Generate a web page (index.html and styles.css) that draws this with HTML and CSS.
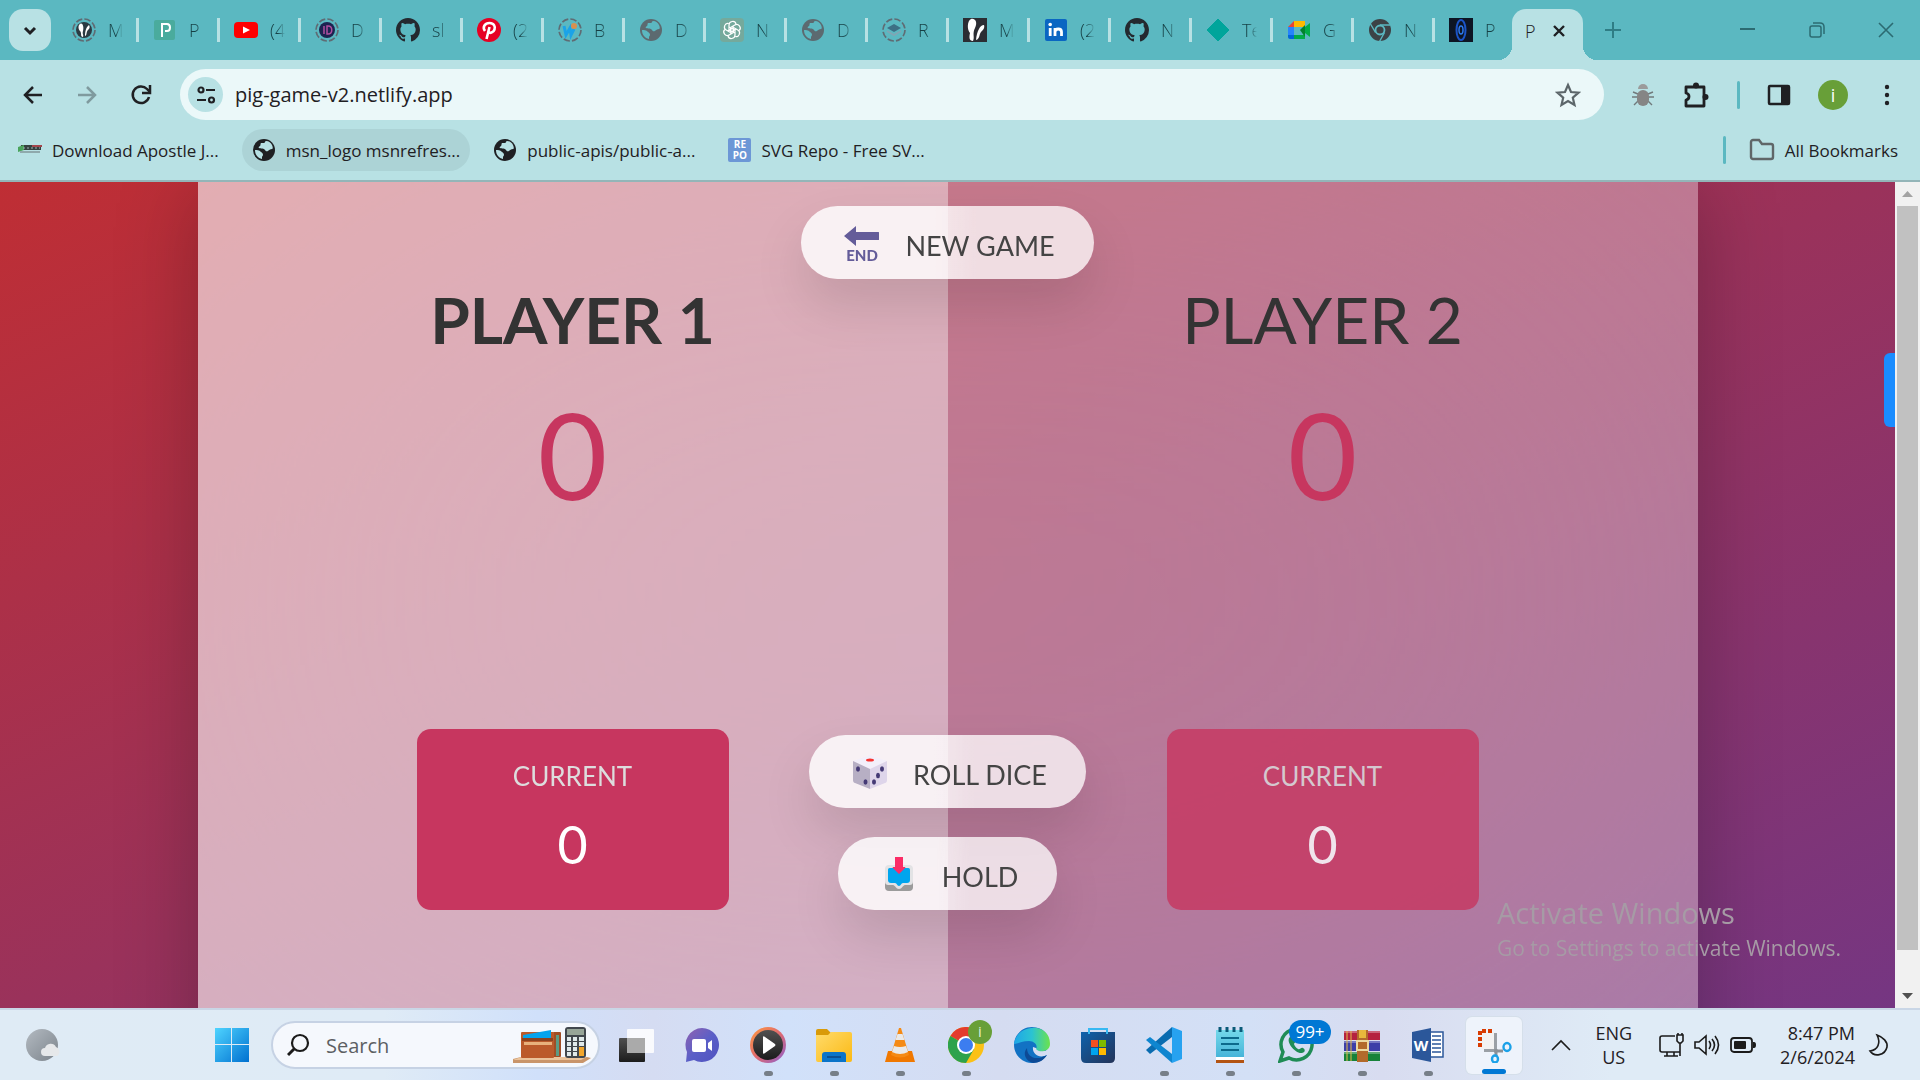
FILE: index.html
```html
<!DOCTYPE html>
<html lang="en">
<head>
<meta charset="utf-8">
<title>Pig Game</title>
<link rel="stylesheet" href="styles.css">
</head>
<body>
<svg class="defs" aria-hidden="true">
  <defs>
    <linearGradient id="g-win" x1="0" y1="0" x2="1" y2="1"><stop offset="0" stop-color="#4fd4ff"/><stop offset="1" stop-color="#0070d0"/></linearGradient>
    <linearGradient id="g-chat" x1="0" y1="0" x2="1" y2="1"><stop offset="0" stop-color="#9162b0"/><stop offset=".5" stop-color="#5b5fc7"/><stop offset="1" stop-color="#4f52c0"/></linearGradient>
    <linearGradient id="g-media" x1="0" y1="0" x2="1" y2="1"><stop offset="0" stop-color="#ff9a3d"/><stop offset=".5" stop-color="#e06a70"/><stop offset="1" stop-color="#8a5fd0"/></linearGradient>
    <linearGradient id="g-dark" x1="0" y1="0" x2="0" y2="1"><stop offset="0" stop-color="#505050"/><stop offset="1" stop-color="#1c1c1c"/></linearGradient>
    <linearGradient id="g-folder" x1="0" y1="0" x2="1" y2="1"><stop offset="0" stop-color="#ffdb6b"/><stop offset="1" stop-color="#fbb914"/></linearGradient>
    <linearGradient id="g-edge" x1="0" y1="0" x2="1" y2="0"><stop offset="0" stop-color="#1fa6e8"/><stop offset=".5" stop-color="#2bc3d2"/><stop offset="1" stop-color="#6be34c"/></linearGradient>
    <linearGradient id="g-store" x1="0" y1="0" x2="1" y2="1"><stop offset="0" stop-color="#0d62ad"/><stop offset="1" stop-color="#243358"/></linearGradient>
    <linearGradient id="g-note" x1="0" y1="0" x2="0" y2="1"><stop offset="0" stop-color="#74d9ea"/><stop offset="1" stop-color="#45b3d8"/></linearGradient>
    <linearGradient id="g-moon" x1="0" y1="0" x2="1" y2="1"><stop offset="0" stop-color="#b3bac1"/><stop offset="1" stop-color="#7c848c"/></linearGradient>
    <symbol id="globe" viewBox="0 0 24 24"><circle cx="12" cy="12" r="11" fill="currentColor"/><path d="M14 3c-1 0-1 2-2 2H9c-1 1 0 2-1 3-1 1-2 1-1 2 2 1 5 0 6 2s2 1 3 1c1-1 2-2 4-2 1 0 1-2 0-4-1-2-3-4-6-4zM3 12c2 0 4 0 6 2 1 1 2 1 2 3 0 1-1 1-1 2v2c-4-1-7-4-7-9z" class="globe-land"/></symbol>
    <symbol id="ring" viewBox="0 0 24 24"><circle cx="12" cy="12" r="11" fill="none" stroke="#5f6c74" stroke-width="1.7" stroke-dasharray="6.5 2.14"/></symbol>
    <symbol id="github" viewBox="0 0 16 16"><path fill="#24292f" d="M8 0C3.58 0 0 3.58 0 8c0 3.54 2.29 6.53 5.47 7.59.4.07.55-.17.55-.38 0-.19-.01-.82-.01-1.49-2.01.37-2.53-.49-2.69-.94-.09-.23-.48-.94-.82-1.13-.28-.15-.68-.52-.01-.53.63-.01 1.08.58 1.23.82.72 1.21 1.87.87 2.33.66.07-.52.28-.87.51-1.07-1.78-.2-3.64-.89-3.64-3.95 0-.87.31-1.59.82-2.15-.08-.2-.36-1.02.08-2.12 0 0 .67-.21 2.2.82.64-.18 1.32-.27 2-.27s1.36.09 2 .27c1.53-1.04 2.2-.82 2.2-.82.44 1.1.16 1.92.08 2.12.51.56.82 1.27.82 2.15 0 3.07-1.87 3.75-3.65 3.95.29.25.54.73.54 1.48 0 1.07-.01 1.93-.01 2.2 0 .21.15.46.55.38A8.01 8.01 0 0 0 16 8c0-4.42-3.58-8-8-8z"/></symbol>
  </defs>
</svg>

<header class="browser">
  <div class="tabstrip">
    <button class="tab-search" aria-label="Search tabs"><svg width="24" height="24" viewBox="0 0 24 24"><path d="M7 10l5 5 5-5" fill="none" stroke="#1f2023" stroke-width="3"/></svg></button>
    <nav class="tabs" aria-label="Tabs">
      <a class="tab" href="#"><svg class="fav" viewBox="0 0 24 24"><use href="#ring"/><circle cx="12" cy="12" r="8" fill="#2b3a42"/><path d="M8 6c3-2 4 4 3 7s1 4 0 6c-3 0-1-4-3-6s-2-6 0-7zM17 7c-3 2-4 7-4 11 2 0 1-4 3-6s2-3 1-5z" fill="#fff"/></svg><span>M</span></a>
      <a class="tab" href="#"><svg class="fav" viewBox="0 0 24 24"><rect x="1" y="2" width="21" height="20" rx="2" fill="#4aab9d"/><path d="M9 19V6h5c4 0 4 7 0 7h-2" fill="none" stroke="#fff" stroke-width="2"/></svg><span>P</span></a>
      <a class="tab" href="#"><svg class="fav" viewBox="0 0 24 24"><rect y="4" width="24" height="16" rx="4" fill="#f00"/><path d="M9 8.500l7 3.500-7 3.500z" fill="#fff"/></svg><span>(4</span></a>
      <a class="tab" href="#"><svg class="fav" viewBox="0 0 24 24"><use href="#ring"/><circle cx="12" cy="12" r="8" fill="#1c2450"/><path d="M9 8v8M12 8v8h1c5 0 5-8 0-8z" fill="none" stroke="#b04fa0" stroke-width="1.500"/></svg><span>D</span></a>
      <a class="tab" href="#"><svg class="fav" viewBox="0 0 24 24"><use href="#github"/></svg><span>sl</span></a>
      <a class="tab" href="#"><svg class="fav" viewBox="0 0 24 24"><circle cx="12" cy="12" r="12" fill="#e60023"/><path d="M8 13c-3-4 0-8 4.500-8s6 3.500 5 6.500-5 4.500-6 2M12.500 9l-3 12" fill="none" stroke="#fff" stroke-width="2.600"/></svg><span>(2</span></a>
      <a class="tab" href="#"><svg class="fav" viewBox="0 0 24 24"><use href="#ring"/><path d="M6 8l2 9 4-7 1 7 3-6" fill="none" stroke="#1ba3e8" stroke-width="3"/><circle cx="16" cy="8" r="3" fill="#d89050"/></svg><span>B</span></a>
      <a class="tab dim" href="#"><svg class="fav" viewBox="0 0 24 24"><use href="#globe"/></svg><span>D</span></a>
      <a class="tab" href="#"><svg class="fav" viewBox="0 0 24 24"><rect width="24" height="24" rx="4" fill="#75a99c"/><g fill="none" stroke="#fff" stroke-width="1.200"><path id="petal" d="M9 12V7c0-4 6-5 7-1M9 9l6 3"/><use href="#petal" transform="rotate(60 12 12)"/><use href="#petal" transform="rotate(120 12 12)"/><use href="#petal" transform="rotate(180 12 12)"/><use href="#petal" transform="rotate(240 12 12)"/><use href="#petal" transform="rotate(300 12 12)"/></g></svg><span>N</span></a>
      <a class="tab dim" href="#"><svg class="fav" viewBox="0 0 24 24"><use href="#globe"/></svg><span>D</span></a>
      <a class="tab" href="#"><svg class="fav" viewBox="0 0 24 24"><use href="#ring"/><path d="M12 6l7 4-7 4-7-4z" fill="#3d6f85"/><path d="M5 13l7 4 7-4" fill="none" stroke="#7fa6b4" stroke-width="2"/></svg><span>R</span></a>
      <a class="tab" href="#"><svg class="fav" viewBox="0 0 24 24"><rect width="24" height="24" fill="#2b2d33"/><path d="M8 1c4-1 7 3 4 9s0 9-2 13c-4 0-4-4-3-8-3-3-3-12 1-14zM21 7c-4 0-7 6-8 15 4-1 3-6 5-8s4-4 3-7z" fill="#fff"/></svg><span>M</span></a>
      <a class="tab" href="#"><svg class="fav" viewBox="0 0 24 24"><rect x="1" y="1" width="22" height="22" rx="2" fill="#0a66c2"/><path d="M6.200 10v8M11 18v-8M11 14c0-4 6.500-4 6.500 0v4" fill="none" stroke="#fff" stroke-width="2.800"/><circle cx="6.200" cy="6.500" r="1.800" fill="#fff"/></svg><span>(2</span></a>
      <a class="tab" href="#"><svg class="fav" viewBox="0 0 24 24"><use href="#github"/></svg><span>N</span></a>
      <a class="tab" href="#"><svg class="fav" viewBox="0 0 24 24"><path d="M12 1l11 11-11 11L1 12z" fill="#00a59b" stroke="#00a59b"/></svg><span>Te</span></a>
      <a class="tab" href="#"><svg class="fav" viewBox="0 0 24 24"><path d="M1 9h6v8H1z" fill="#2684fc"/><path d="M1 9l6-6v6z" fill="#ea4335"/><path d="M7 3h11v6H7z" fill="#ffba00"/><path d="M7 17h11v4H7z" fill="#00ac47"/><path d="M1 17h6v4H3c-1 0-2-1-2-2z" fill="#0066da"/><path d="M13 12l5-5v12z" fill="#00832d"/><path d="M18 9l5-4v14l-5-4z" fill="#00ac47"/></svg><span>G</span></a>
      <a class="tab" href="#"><svg class="fav" viewBox="0 0 24 24"><circle cx="12" cy="12" r="11" fill="#3c4246"/><g stroke="#5bb8c1" stroke-width="1.400"><path d="M12 7h10M7.500 14.500l-5-8.500M16.500 14.500l-5 9"/></g><circle cx="12" cy="12" r="4.500" fill="#3c4246" stroke="#5bb8c1" stroke-width="1.800"/></svg><span>N</span></a>
      <a class="tab" href="#"><svg class="fav" viewBox="0 0 24 24"><rect width="24" height="24" fill="#0d1524"/><ellipse cx="12" cy="12" rx="4.500" ry="10" fill="none" stroke="#1b54c8" stroke-width="2"/><ellipse cx="12" cy="12" rx="2" ry="4" fill="none" stroke="#2e7bf0" stroke-width="1.500"/></svg><span>P</span></a>
    </nav>
    <div class="tab-active"><span>P</span><button aria-label="Close tab"><svg width="16" height="16" viewBox="0 0 16 16"><path d="M3 3l10 10M13 3L3 13" stroke="#1f2023" stroke-width="2.400"/></svg></button></div>
    <button class="new-tab" aria-label="New tab"><svg width="16" height="16" viewBox="0 0 16 16"><path d="M8 0v16M0 8h16" stroke="#2f7d85" stroke-width="2"/></svg></button>
    <div class="window-controls">
      <button aria-label="Minimize"><svg width="18" height="18" viewBox="0 0 18 18"><path d="M1 8h15" stroke="#2c6b72" stroke-width="2"/></svg></button>
      <button aria-label="Restore"><svg width="18" height="18" viewBox="0 0 18 18"><rect x="2" y="5" width="11" height="11" rx="2" fill="none" stroke="#2c6b72" stroke-width="1.500"/><path d="M5 2h7c3 0 4 1 4 4v7" fill="none" stroke="#2c6b72" stroke-width="1.500"/></svg></button>
      <button aria-label="Close"><svg width="18" height="18" viewBox="0 0 18 18"><path d="M2 2l14 14M16 2L2 16" stroke="#2c6b72" stroke-width="1.600"/></svg></button>
    </div>
  </div>

  <div class="toolbar">
    <div class="nav-buttons">
      <button aria-label="Back"><svg width="24" height="24" viewBox="0 0 24 24"><path d="M21 12H4M12 4l-8 8 8 8" fill="none" stroke="#1f2023" stroke-width="2.500"/></svg></button>
      <button aria-label="Forward"><svg width="24" height="24" viewBox="0 0 24 24"><path d="M3 12h17M12 4l8 8-8 8" fill="none" stroke="#7f9a9e" stroke-width="2.500"/></svg></button>
      <button aria-label="Reload"><svg width="24" height="24" viewBox="0 0 24 24"><path d="M20 14a8.300 8.300 0 1 1-2-8l3 3" fill="none" stroke="#1f2023" stroke-width="2.500"/><path d="M21 2v8h-8" fill="none" stroke="#1f2023" stroke-width="2.500"/></svg></button>
    </div>
    <div class="omnibox">
      <button class="site-info" aria-label="View site information"><svg width="20" height="20" viewBox="0 0 20 20"><g fill="none" stroke="#1f2023" stroke-width="2.200"><circle cx="5" cy="5" r="2.500"/><path d="M10 5h9M1 15h9"/><circle cx="15.500" cy="15" r="2.500"/></g></svg></button>
      <input type="text" value="pig-game-v2.netlify.app" aria-label="Address">
      <button aria-label="Bookmark this tab"><svg width="26" height="26" viewBox="0 0 26 26"><path d="M13 3l3 7 7.500.7-5.700 5 1.700 7.300-6.500-4-6.500 4 1.700-7.300-5.700-5 7.500-.7z" fill="none" stroke="#5c666a" stroke-width="2.200"/></svg></button>
    </div>
    <div class="tools">
      <button aria-label="Debugger"><svg width="24" height="24" viewBox="0 0 24 24"><g fill="none" stroke="#70797b" stroke-width="1.400"><path d="M7 11L2 9M6 14H1M7 18l-4 4M17 11l5-2M18 14h5M17 18l4 4"/></g><path d="M7 6a5 5 0 0 1 10 0z" fill="#9b9b9b"/><rect x="6" y="7" width="12" height="16" rx="6" fill="#858585"/></svg></button>
      <button aria-label="Extensions"><svg width="28" height="28" viewBox="0 0 28 28"><path d="M4 6h18v19H4v-6c4-1 4-6 0-7z" fill="none" stroke="#1f2023" stroke-width="2.800" stroke-linejoin="round"/><circle cx="14" cy="4.500" r="3" fill="#1f2023"/><circle cx="23.500" cy="16" r="3" fill="#1f2023"/></svg></button>
      <i class="bar"></i>
      <button aria-label="Side panel"><svg width="24" height="24" viewBox="0 0 24 24"><rect x="2" y="3" width="20" height="18" rx="1" fill="none" stroke="#1f2023" stroke-width="2.500"/><path d="M14 3h8v18h-8z" fill="#1f2023"/></svg></button>
      <button class="avatar" aria-label="Profile">i</button>
      <button aria-label="Menu"><svg width="24" height="24" viewBox="0 0 24 24"><g fill="#1f2023"><circle cx="12" cy="4" r="2.200"/><circle cx="12" cy="12" r="2.200"/><circle cx="12" cy="20" r="2.200"/></g></svg></button>
    </div>
  </div>

  <nav class="bookmarks" aria-label="Bookmarks">
    <a href="#"><svg width="24" height="24" viewBox="0 0 24 24"><path d="M3 7h20v5H2z" fill="#35403f"/><path d="M0 9l6-2v5l-6 2z" fill="#4aa45c"/><path d="M14 7h10v2H14z" fill="#a3464c"/><path d="M5 10h17" stroke="#9cb3b5" stroke-dasharray="2 2"/><path d="M2 14h20" stroke="#8fa9ac" stroke-width="2"/></svg>Download Apostle J...</a>
    <a href="#" class="hovered"><svg width="24" height="24"><use href="#globe"/></svg>msn_logo msnrefres...</a>
    <a href="#"><svg width="24" height="24"><use href="#globe"/></svg>public-apis/public-a...</a>
    <a href="#"><span class="repo"><span>RE</span><span>PO</span></span>SVG Repo - Free SV...</a>
    <i class="bar"></i>
    <a href="#" class="all"><svg width="26" height="24" viewBox="0 0 26 24"><path d="M2 19V4c0-1 1-2 2-2h6l3 4h9c1 0 2 1 2 2v11c0 1-1 2-2 2H4c-1 0-2-1-2-2z" fill="none" stroke="#5f6668" stroke-width="2.400"/></svg>All Bookmarks</a>
  </nav>
</header>

<div class="viewport">
  <div class="page">
    <main class="game">
      <section class="player player-active">
        <h2 class="name">Player 1</h2>
        <p class="score">0</p>
        <div class="current"><p class="current-label">Current</p><p class="current-score">0</p></div>
      </section>
      <section class="player">
        <h2 class="name">Player 2</h2>
        <p class="score">0</p>
        <div class="current"><p class="current-label">Current</p><p class="current-score">0</p></div>
      </section>
      <div class="controls">
        <button class="btn"><svg width="44" height="36" viewBox="0 0 44 36"><path d="M4 11L16 1v6h22c1 0 1 0 1 1v6c0 1 0 1-1 1H16v6z" fill="#645c99"/><text x="22" y="36" class="end-text">END</text></svg><span>New game</span></button>
        <button class="btn btn-roll"><svg width="44" height="36" viewBox="0 0 44 36"><path d="M5 7l17-6 17 6-17 8z" fill="#f3effa"/><path d="M5 7l17 8v20L7 29c-1 0-2-1-2-3z" fill="#b7afc4"/><path d="M39 7l-17 8v20l15-6c1 0 2-1 2-3z" fill="#ded5ea"/><ellipse cx="22" cy="6" rx="4" ry="1.600" fill="#f5322f"/><g fill="#453a75"><ellipse cx="10" cy="15" rx="2" ry="2.700"/><ellipse cx="17.500" cy="28" rx="2" ry="2.700"/><ellipse cx="34" cy="15" rx="2" ry="2.700"/><ellipse cx="30" cy="21.500" rx="2" ry="2.700"/><ellipse cx="26" cy="28" rx="2" ry="2.700"/></g></svg><span>Roll dice</span></button>
        <button class="btn"><svg width="44" height="36" viewBox="0 0 44 36"><rect x="8" y="16" width="28" height="19" rx="4" fill="#9b9b9b"/><path d="M12 9h20c3 0 4 2 4 4v12c0 3-1 4-4 4h-4c-2 0-3 4-6 4s-4-4-6-4h-4c-3 0-4-1-4-4V13c0-2 1-4 4-4z" fill="#e3e3e5"/><path d="M13 12h18c2 0 2 1 2 3v9c0 2-1 3-3 3h-4c-2 0-2 3-4 3s-2-3-4-3h-4c-2 0-3-1-3-3v-9c0-2 0-3 2-3z" fill="#00a5ee"/><path d="M18 1h8v10h2c1 0 0 1 0 1l-6 6-6-6s-1-1 0-1h2z" fill="#fb2c66"/></svg><span>Hold</span></button>
      </div>
    </main>
    <i class="side-handle"></i>
    <div class="watermark"><p class="wm-title">Activate Windows</p><p class="wm-sub">Go to Settings to activate Windows.</p></div>
  </div>
  <div class="scrollbar">
    <svg width="11" height="24" viewBox="0 0 11 24"><path d="M5.500 9L11 15H0z" fill="#a3a3a3"/></svg>
    <i class="thumb"></i>
    <svg width="11" height="24" viewBox="0 0 11 24"><path d="M5.500 15L11 9H0z" fill="#505050"/></svg>
  </div>
</div>

<footer class="taskbar">
  <button class="weather" aria-label="Weather"><svg width="36" height="36" viewBox="0 0 36 36"><circle cx="16" cy="18" r="16" fill="url(#g-moon)"/><path d="M19 29a4 4 0 0 1 0-8 6 6 0 0 1 11-1 5 5 0 0 1 1 9z" fill="#e6e8ea"/></svg></button>
  <div class="task-left">
    <button class="start" aria-label="Start"><svg width="36" height="36" viewBox="0 0 36 36"><path d="M1 1h16v16H1zM18 1h17v16H18zM1 18h16v17H1zM18 18h17v17H18z" fill="url(#g-win)"/></svg></button>
    <label class="search"><svg width="24" height="24" viewBox="0 0 24 24"><circle cx="13" cy="10" r="8" fill="none" stroke="#1b1b1b" stroke-width="2.200"/><path d="M7 16l-6 6" stroke="#1b1b1b" stroke-width="3"/></svg><input type="text" placeholder="Search" aria-label="Search"><svg width="80" height="38" viewBox="0 0 80 38"><path d="M8 31h66l4 1-8 5H0v-4z" fill="#c9956a"/><path d="M8 31h66l-6 3H0z" fill="#eac39b"/><rect x="40" y="6" width="8" height="25" rx="1" fill="#a04e26"/><path d="M43 9h3v21h-3z" fill="#5c9c85"/><rect x="8" y="6" width="33" height="26" rx="1" fill="#bb5a2b"/><path d="M10 9l28-5v9H10z" fill="#05a4ee"/><path d="M9 12h31v3H9z" fill="#8b4320"/><rect x="11" y="16" width="28" height="3" fill="#e8b17c"/><rect x="52" y="1" width="21" height="31" rx="3" fill="#41474d"/><rect x="54" y="3" width="17" height="6" fill="#97a598"/><g fill="#dfe9ea"><path d="M54 11h4v4h-4zM60 11h4v4h-4zM66 11h5v4h-5zM54 16h4v4h-4zM60 16h4v4h-4zM66 16h5v4h-5zM54 21h4v4h-4zM60 21h4v4h-4zM54 26h4v4h-4zM60 26h4v4h-4z"/></g><path d="M66 21h5v9h-5z" fill="#f2a62c"/></svg></label>
  </div>
  <div class="apps">
    <button class="app" aria-label="Task view"><svg viewBox="0 0 36 36"><rect x="1" y="11" width="26" height="24" rx="1" fill="url(#g-dark)"/><rect x="9" y="2" width="27" height="24" rx="1" fill="#fff" opacity=".85"/><path d="M9 11h18v15H9z" fill="#aaa"/></svg></button>
    <button class="app" aria-label="Chat"><svg viewBox="0 0 36 36"><path d="M18 1a17 17 0 1 1-8 32l-8 2 1-10A17 17 0 0 1 18 1z" fill="url(#g-chat)"/><rect x="8" y="12" width="14" height="13" rx="2" fill="#fff"/><path d="M24 16l4-3v11l-4-3z" fill="#fff"/></svg></button>
    <button class="app running" aria-label="Media Player"><svg viewBox="0 0 36 36"><circle cx="18" cy="18" r="18" fill="url(#g-media)"/><circle cx="18" cy="18" r="15" fill="url(#g-dark)"/><path d="M13 10c0-1 1-1 2 0l10 7q1 1 0 2l-10 7c-1 1-2 1-2 0z" fill="#fff"/></svg></button>
    <button class="app running" aria-label="File Explorer"><svg viewBox="0 0 36 36"><path d="M0 4q0-2 2-2h9l4 4v6H0z" fill="#d99a08"/><path d="M0 8h12l3-3h19q2 0 2 2v26q0 2-2 2H2q-2 0-2-2z" fill="url(#g-folder)"/><path d="M6 35V28q0-3 3-3h18q3 0 3 3v7z" fill="#0b74c9"/><path d="M11 30h14" stroke="#0a4f94" stroke-width="2"/></svg></button>
    <button class="app running" aria-label="VLC"><svg viewBox="0 0 36 36"><path d="M6 24h24l3 11H3z" fill="#f07800"/><path d="M17 1h2l8 27q-9 5-18 0z" fill="#f58a14"/><path d="M15.500 7h5l2 6h-9zM12 19q6 2 12 0l2 6q-8 4-16 0z" fill="#e9e9e9"/></svg></button>
    <button class="app running" aria-label="Chrome"><svg viewBox="0 0 36 36"><circle cx="18" cy="18" r="18" fill="#fbc116"/><path d="M18 18L2.400 9A18 18 0 0 1 33.600 9z" fill="#e33b2e"/><path d="M2.400 9A18 18 0 0 0 18 36l8-14-8-4z" fill="#2da24c"/><circle cx="18" cy="18" r="9" fill="#fff"/><circle cx="18" cy="18" r="7" fill="#3c7df0"/></svg><span class="profile-badge">i</span></button>
    <button class="app" aria-label="Edge"><svg viewBox="0 0 36 36"><path d="M18 0a18 18 0 1 0 15 28c-8 4-15-1-14-8l12 4c8-4 5-24-13-24z" fill="#1272c4"/><path d="M0 17C2-3 36-6 36 17c0 8-11 9-14 5 2-3-1-8-7-8-7 0-12 3-15 3z" fill="url(#g-edge)"/><path d="M13 21c0 10 10 13 20 7-3 5-8 8-14 8-7-2-11-9-6-15z" fill="#0d4a96"/></svg></button>
    <button class="app" aria-label="Microsoft Store"><svg viewBox="0 0 36 36"><path d="M1 5h34v26q0 5-5 5H6q-5 0-5-5z" fill="url(#g-store)"/><path d="M9 7V2h18v5" fill="none" stroke="#37b8f2" stroke-width="2"/><path d="M11 13h7v7h-7z" fill="#f25022"/><path d="M19 13h7v7h-7z" fill="#7fba00"/><path d="M11 21h7v7h-7z" fill="#00a4ef"/><path d="M19 21h7v7h-7z" fill="#ffb900"/></svg></button>
    <button class="app running" aria-label="Visual Studio Code"><svg viewBox="0 0 36 36"><path d="M26 0v10L4 27l-4-4z" fill="#0a6cb0"/><path d="M0 13l4-3 22 17v9z" fill="#0f86d0"/><path d="M26 0l10 4v28l-10 4z" fill="#27a2f0"/></svg></button>
    <button class="app running" aria-label="Notepad"><svg viewBox="0 0 36 36"><path d="M4 3h28v28H4z" fill="url(#g-note)"/><path d="M4 30h28v3H4z" fill="#fff"/><path d="M4 33h28v3H4z" fill="#b35412"/><path d="M8 0v5M15 0v5M22 0v5M29 0v5" stroke="#0a5a78" stroke-width="3"/><path d="M9 11h18M9 17h18M9 23h18" stroke="#0c6a8c" stroke-width="2"/></svg></button>
    <button class="app running" aria-label="WhatsApp"><svg viewBox="0 0 36 36"><path d="M2 34l3-9a15.500 15.500 0 1 1 6 6z" fill="none" stroke="#1f8c55" stroke-width="3.500"/><path d="M12 10c-5 4 5 17 12 16 4-1 3-4 1-5s-3 2-5 1-4-4-4-5 2-1 1-4-3-4-5-3z" fill="#1f8c55"/></svg><span class="count-badge">99+</span></button>
    <button class="app running" aria-label="WinRAR"><svg viewBox="0 0 36 36"><path d="M0 4h36v9H0z" fill="#b5213f"/><path d="M0 14h36v10H0z" fill="#3c3ea8"/><path d="M0 25h36v9H0z" fill="#17823a"/><path d="M0 5h36M0 15h36M0 26h36" stroke="#fff" stroke-opacity=".3" stroke-width="2"/><path d="M3 4v30M7 4v30" stroke="#e3bd4a"/><path d="M13 3h11v32H13z" fill="#b36a2b"/><path d="M15 3h7v8h-7z" fill="#e8b73c"/><rect x="13" y="14" width="11" height="9" fill="none" stroke="#ecd9a0" stroke-width="2"/></svg></button>
    <button class="app running" aria-label="Word"><svg viewBox="0 0 36 36"><rect x="18" y="5" width="15" height="25" fill="#fff" stroke="#2b579a" stroke-width="1.500"/><path d="M22 9h9M22 13h9M22 17h9M22 21h9M22 25h9" stroke="#2b579a" stroke-width="1.500"/><path d="M2 5l19-4v34L2 31z" fill="#2b579a"/><text x="11" y="24" class="word-text">W</text></svg></button>
    <button class="app focused" aria-label="Snipping Tool"><svg viewBox="0 0 36 36"><path d="M5 5h13v17H5z" fill="#f2f2f2"/><path d="M4 20V4h14" fill="none" stroke="#d83b01" stroke-width="4" stroke-dasharray="4 2"/><path d="M18 6h3v18h-3zM8 22h12v3H8z" fill="#9aa0a6"/><path d="M18 24h9M20 22v7" stroke="#8b9197" stroke-width="3"/><ellipse cx="31" cy="20" rx="3.500" ry="4" fill="none" stroke="#1ba1e8" stroke-width="2.400"/><ellipse cx="19" cy="32" rx="3" ry="3.500" fill="none" stroke="#1ba1e8" stroke-width="2.400"/></svg></button>
  </div>
  <div class="tray">
    <button aria-label="Show hidden icons"><svg width="20" height="12" viewBox="0 0 20 12"><path d="M1 11l9-9 9 9" fill="none" stroke="#1b1b1b" stroke-width="1.600"/></svg></button>
    <span class="lang">ENG<br>US</span>
    <span class="tray-icons">
      <svg width="26" height="26" viewBox="0 0 26 26"><g fill="none" stroke="#1b1b1b" stroke-width="1.600"><path d="M17 4H4q-2 0-2 2v12q0 2 2 2h18M9 20v4M16 20v4M6 24h14"/><path d="M19 3h6v6l-2 2h-2l-2-2zM22 11v13M20 1v2M24 1v2"/></g></svg>
      <svg width="26" height="26" viewBox="0 0 26 26"><g fill="none" stroke="#1b1b1b" stroke-width="1.600"><path d="M1 10h4l7-6v18l-7-6H1zM15 9q3 4 0 8M18 7q5 6 0 12M21 4q7 9 0 18"/></g></svg>
      <svg width="26" height="26" viewBox="0 0 26 26"><rect x="1" y="6" width="21" height="14" rx="3" fill="none" stroke="#1b1b1b" stroke-width="1.800"/><rect x="4" y="9" width="12" height="8" rx="1" fill="#1b1b1b"/><path d="M23 10h1q2 0 2 3t-2 3h-1z" fill="#1b1b1b"/></svg>
    </span>
    <time class="clock" datetime="2024-02-06T20:47">8:47 PM<br>2/6/2024</time>
    <svg width="24" height="24" viewBox="0 0 24 24"><path d="M10 2c6 2 11 7 10 12-2 9-13 10-17 4 8-1 11-8 7-16z" fill="none" stroke="#1b1b1b" stroke-width="1.600"/></svg>
  </div>
</footer>
</body>
</html>
```
FILE: styles.css
```css
* { box-sizing: border-box; margin: 0; padding: 0; }

html, body { height: 100%; }

body {
  display: flex;
  flex-direction: column;
  overflow: hidden;
  font-family: "Open Sans", "Noto Sans", sans-serif;
  color: #1f2023;
}

button { border: 0; background: none; font: inherit; color: inherit; display: flex; align-items: center; justify-content: center; }
input { border: 0; outline: 0; background: none; font: inherit; color: inherit; min-width: 0; }
a { color: inherit; text-decoration: none; }
svg { display: block; flex: none; }
.defs { position: absolute; width: 0; height: 0; }

/* Browser chrome */
.browser { flex: none; background: #b8e1e4; border-bottom: 2px solid #93b5b8; }

.tabstrip { display: flex; align-items: flex-end; height: 60px; padding-left: 9px; background: #5bb8c1; }
.tab-search { width: 42px; height: 42px; margin: 0 5px 9px 0; border-radius: 14px; background: #b8e1e4; }
.tabs { display: flex; flex: 1; max-width: 1452px; height: 60px; align-items: center; margin-right: 4px; }
.tab { position: relative; display: flex; flex: 1; align-items: center; gap: 12px; height: 24px; padding: 0 13px 0 16px; font-size: 18px; font-weight: 300; color: #163f44; }
.tab + .tab { border-left: 3px solid #b8e1e4; padding-left: 14px; }
.tab span { width: 15px; white-space: nowrap; mask-image: linear-gradient(90deg, #000 50%, transparent); }
.fav { width: 24px; height: 24px; }
.tab.dim { --land: #5bb8c1; }
.tab.dim .fav { color: #5c6a70; }
.globe-land { fill: var(--land, #b8e1e4); }

.tab-active { position: relative; display: flex; align-items: center; justify-content: space-between; width: 71px; height: 51px; padding: 0 16px 8px 13px; border-radius: 14px 14px 0 0; background: #b8e1e4; font-size: 18px; font-weight: 300; }
.tab-active::before, .tab-active::after { content: ""; position: absolute; bottom: 0; width: 14px; height: 14px; }
.tab-active::before { right: 100%; background: radial-gradient(circle at 0 0, transparent 14px, #b8e1e4 14px); }
.tab-active::after { left: 100%; background: radial-gradient(circle at 100% 0, transparent 14px, #b8e1e4 14px); }
.new-tab { width: 60px; height: 60px; }
.window-controls { display: flex; margin-left: auto; }
.window-controls button { width: 69px; height: 60px; }

.toolbar { display: flex; align-items: center; height: 69px; background: #b8e1e4; }
.nav-buttons { display: flex; gap: 30px; padding: 0 27px 0 21px; }
.omnibox { display: flex; flex: 1; align-items: center; height: 51px; margin: 9px 0; padding: 0 23px 0 8px; border-radius: 26px; background: #ebf8f9; font-size: 20px; }
.omnibox input { flex: 1; padding-left: 12px; }
.site-info { width: 35px; height: 35px; border-radius: 50%; background: #b8e1e4; }
.tools { display: flex; align-items: center; gap: 27px; padding: 0 21px 0 27px; }
.bar { width: 3px; height: 28px; border-radius: 2px; background: #5bb8c1; }
.avatar { width: 30px; height: 30px; border-radius: 50%; background: #689f38; color: #fff; font-size: 18px; }

.bookmarks { display: flex; align-items: center; height: 51px; padding: 0 12px 9px 8px; gap: 13px; font-size: 17px; }
.bookmarks a { display: flex; align-items: center; gap: 10px; height: 42px; padding: 0 10px; border-radius: 21px; white-space: nowrap; }
.bookmarks .hovered { background: #acd3d6; }
.bookmarks .bar { margin-left: auto; }
.repo { display: flex; flex-direction: column; width: 23px; height: 24px; padding: 1px 0; border-radius: 2px; background: #6c97d6; color: #fff; font-size: 10px; line-height: 11px; font-weight: 700; text-align: center; }

/* Game page */
.viewport { display: flex; flex: 1; min-height: 0; }
.page { position: relative; display: flex; flex: 1; align-items: center; justify-content: center; overflow: hidden; background: linear-gradient(to top left, #753682 0%, #bf2e34 100%); font-family: Lato, "Open Sans", sans-serif; color: #333; }
.game { position: relative; display: flex; flex: none; width: 1500px; max-width: 100%; height: 900px; background: rgba(255, 255, 255, .35); backdrop-filter: blur(300px); box-shadow: 0 45px 75px rgba(0, 0, 0, .25); }
.player { display: flex; flex: 1; flex-direction: column; align-items: center; padding: 135px; }
.player-active { background: rgba(255, 255, 255, .4); }
.name { font-size: 64px; line-height: 80px; font-weight: 400; text-transform: uppercase; white-space: nowrap; }
.player-active .name { font-weight: 700; }
.score { margin-top: 20px; font-size: 120px; line-height: 148px; color: #c7365f; }
.current { width: 65%; margin-top: auto; padding: 30px; border-radius: 14px; background: #c7365f; opacity: .8; text-align: center; }
.player-active .current { opacity: 1; }
.current-label { font-size: 26px; line-height: 34px; margin-bottom: 15px; color: #ddd; text-transform: uppercase; }
.current-score { font-size: 52px; line-height: 72px; color: #fff; }

.controls { position: absolute; inset: 0; display: flex; flex-direction: column; align-items: center; padding: 61px 0 135px; pointer-events: none; }
.btn { height: 73px; padding: 0 39px; gap: 21px; border-radius: 37px; background: linear-gradient(90deg, rgba(255, 255, 255, .83) 45%, rgba(255, 255, 255, .75) 60%); box-shadow: 0 26px 52px rgba(0, 0, 0, .12); font-size: 27px; text-transform: uppercase; color: #444; pointer-events: auto; }
.btn span { padding-top: 6px; }
.btn-roll { margin: auto 0 29px; }
.end-text { font-family: Lato, sans-serif; font-size: 15px; font-weight: 900; fill: #645c99; text-anchor: middle; }

.side-handle { position: absolute; right: 0; top: 171px; width: 11px; height: 74px; border-radius: 6px 0 0 6px; background: #1a8cff; }
.watermark { position: absolute; right: 54px; bottom: 44px; font-family: "Open Sans", sans-serif; color: #a69ba5; }
.wm-title { font-size: 29px; line-height: 38px; }
.wm-sub { font-size: 21px; line-height: 32px; }

.scrollbar { display: flex; flex-direction: column; align-items: center; width: 25px; background: #f1f1f1; }
.thumb { width: 21px; height: 744px; background: #c1c1c1; }
.scrollbar svg:last-child { margin-top: auto; }

/* Taskbar */
.taskbar { display: flex; flex: none; align-items: center; height: 72px; border-top: 2px solid #c9d6e6; background: linear-gradient(90deg, #dfebf5 0%, #dfebf6 20%, #d0e0fa 28%, #d5dcf2 34%, #d1e1fa 41%, #d5dcf1 52%, #d3e0f6 65%, #d8dcf0 72%, #dfebf6 84%, #dfebf6 100%); }
.weather { width: 36px; margin-left: 26px; }
.task-left { display: flex; align-items: center; gap: 21px; margin-left: 152px; }
.search { display: flex; align-items: center; width: 329px; height: 48px; padding: 0 5px 0 14px; border: 2px solid #c6d2e4; border-radius: 24px; background: #f5f8fd; }
.search input { flex: 1; width: 100px; padding-left: 15px; font-size: 20px; }
.search input::placeholder { color: #5c5f63; opacity: 1; }
.apps { display: flex; margin-left: 3px; }
.app { position: relative; width: 66px; height: 66px; }
.app svg { width: 36px; height: 36px; }
.app.running::after, .app.focused::after { content: ""; position: absolute; bottom: 2px; width: 9px; height: 5px; border-radius: 3px; background: #777f88; }
.app.focused { width: 56px; height: 57px; margin: 5px; border-radius: 6px; background: #eef3fb; box-shadow: 0 0 0 1px #d5dfea; }
.app.focused::after { bottom: 0; width: 24px; background: #0078d4; }
.profile-badge { position: absolute; left: 35px; top: 8px; width: 24px; height: 24px; border-radius: 50%; background: #689f38; color: #e4efd8; font-size: 15px; line-height: 23px; text-align: center; }
.count-badge { position: absolute; left: 26px; top: 8px; width: 42px; height: 24px; border-radius: 12px; background: #0078d4; color: #fff; font-size: 17px; line-height: 24px; text-align: center; }
.word-text { font-size: 15px; font-weight: 700; fill: #fff; text-anchor: middle; }
.tray { display: flex; align-items: center; margin-left: auto; padding-right: 29px; font-size: 18px; line-height: 24px; }
.lang { margin: 0 26px 0 24px; text-align: center; }
.tray-icons { display: flex; gap: 10px; }
.clock { margin: 0 12px 0 24px; text-align: right; }
```
